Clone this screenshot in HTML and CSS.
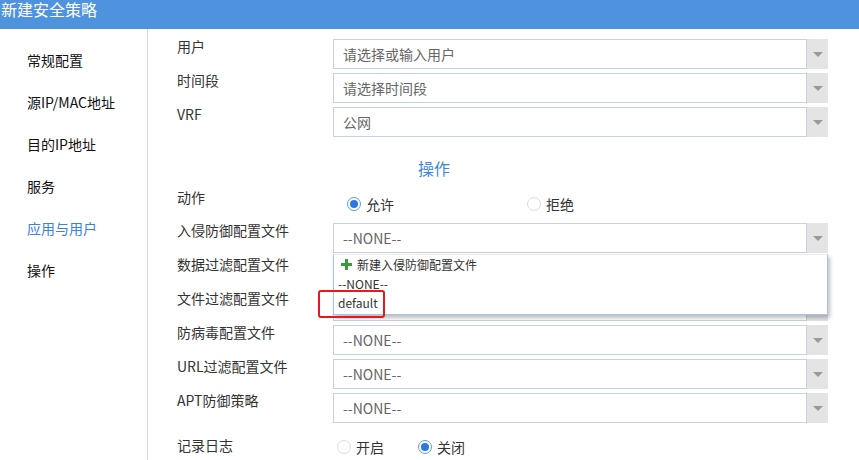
FILE: index.html
```html
<!DOCTYPE html>
<html>
<head>
    <title>新建安全策略</title>
    <link rel="stylesheet" href="styles.css">
</head>
<body>
    <div class="header">新建安全策略</div>
    <div class="layout">
        <ul class="nav">
            <li>常规配置</li>
            <li>源IP/MAC地址</li>
            <li>目的IP地址</li>
            <li>服务</li>
            <li class="active">应用与用户</li>
            <li>操作</li>
        </ul>
        <div class="main">
            <div class="row">
                <div class="label">用户</div>
                <div class="select">
                    <div class="select-box">请选择或输入用户</div>
                    <div class="select-arrow"><span class="tri"></span></div>
                </div>
            </div>
            <div class="row">
                <div class="label">时间段</div>
                <div class="select">
                    <div class="select-box">请选择时间段</div>
                    <div class="select-arrow"><span class="tri"></span></div>
                </div>
            </div>
            <div class="row">
                <div class="label">VRF</div>
                <div class="select">
                    <div class="select-box">公网</div>
                    <div class="select-arrow"><span class="tri"></span></div>
                </div>
            </div>

            <div class="section-title">操作</div>

            <div class="row row-radio">
                <div class="label">动作</div>
                <div class="radios radios-wide">
                    <label class="radio"><span class="dot checked"></span>允许</label>
                    <label class="radio"><span class="dot"></span>拒绝</label>
                </div>
            </div>
            <div class="row">
                <div class="label">入侵防御配置文件</div>
                <div class="select">
                    <div class="select-box">--NONE--</div>
                    <div class="select-arrow"><span class="tri"></span></div>
                    <div class="dropdown">
                        <div class="dd-item dd-new">
                            <svg width="11" height="11" viewBox="0 0 11 11"><path d="M4 0h3v4h4v3H7v4H4V7H0V4h4z" fill="#3c9a3c"/></svg>
                            新建入侵防御配置文件
                        </div>
                        <div class="dd-item">--NONE--</div>
                        <div class="dd-item">default</div>
                        <div class="mark"></div>
                    </div>
                </div>
            </div>
            <div class="row">
                <div class="label">数据过滤配置文件</div>
                <div class="select">
                    <div class="select-box">--NONE--</div>
                    <div class="select-arrow"><span class="tri"></span></div>
                </div>
            </div>
            <div class="row">
                <div class="label">文件过滤配置文件</div>
                <div class="select">
                    <div class="select-box">--NONE--</div>
                    <div class="select-arrow"><span class="tri"></span></div>
                </div>
            </div>
            <div class="row">
                <div class="label">防病毒配置文件</div>
                <div class="select">
                    <div class="select-box">--NONE--</div>
                    <div class="select-arrow"><span class="tri"></span></div>
                </div>
            </div>
            <div class="row">
                <div class="label">URL过滤配置文件</div>
                <div class="select">
                    <div class="select-box">--NONE--</div>
                    <div class="select-arrow"><span class="tri"></span></div>
                </div>
            </div>
            <div class="row">
                <div class="label">APT防御策略</div>
                <div class="select">
                    <div class="select-box">--NONE--</div>
                    <div class="select-arrow"><span class="tri"></span></div>
                </div>
            </div>
            <div class="row row-log">
                <div class="label">记录日志</div>
                <div class="radios radios-narrow">
                    <label class="radio"><span class="dot"></span>开启</label>
                    <label class="radio"><span class="dot checked"></span>关闭</label>
                </div>
            </div>
        </div>
    </div>
</body>
</html>
```

FILE: styles.css
```css
* {
    margin: 0;
    padding: 0;
    box-sizing: border-box;
}

body {
    background: #fff;
    font-family: "Noto Sans CJK SC", "Noto Sans", sans-serif;
    font-size: 14px;
    color: #333;
    overflow: hidden;
}

.header {
    height: 29px;
    background: #4f93de;
    color: #fff;
    font-size: 16px;
    line-height: 19px;
    padding-left: 1px;
}

.layout {
    display: flex;
    height: 431px;
}

.nav {
    list-style: none;
    width: 148px;
    border-right: 1px solid #d9d9d9;
    padding: 10px 0 0 27px;
}

.nav li {
    height: 42px;
    line-height: 42px;
    color: #111;
}

.nav li.active {
    color: #3c80e0;
}

.main {
    flex: 1;
    display: flex;
    flex-direction: column;
    padding: 10px 0 0 29px;
}

.row {
    display: grid;
    grid-template-columns: 156px 495px;
    height: 30px;
    flex: none;
    margin-bottom: 4px;
}

.label {
    line-height: 14px;
    color: #333;
}

.row-log .label {
    padding-top: 2px;
}

.select {
    position: relative;
    display: flex;
}

.select-box {
    flex: 1;
    border: 1px solid #c6d1e1;
    line-height: 28px;
    padding-left: 9px;
    color: #666;
}

.select-arrow {
    width: 21px;
    background: #e4e4e4;
    display: flex;
    align-items: center;
    justify-content: center;
}

.tri {
    width: 0;
    height: 0;
    border-left: 5px solid transparent;
    border-right: 5px solid transparent;
    border-top: 5px solid #9a9a9a;
}

.section-title {
    margin-top: 16px;
    padding-left: 241px;
    font-size: 16px;
    line-height: 22px;
    color: #3f86e0;
}

.row-radio {
    margin-top: 11px;
    height: 29px;
}

.row-log {
    margin-top: 9px;
}

.radios {
    display: flex;
    align-items: flex-start;
    margin-top: 5px;
}

.radios-wide {
    padding-left: 14px;
}

.radios-wide .radio {
    width: 180px;
}

.row-log .radios {
    margin-top: 2px;
}

.radios-narrow {
    padding-left: 4px;
}

.radios-narrow .radio {
    width: 81px;
}

.radio {
    display: flex;
    align-items: center;
    gap: 5px;
    height: 18px;
    line-height: 18px;
    color: #333;
}

.dot {
    position: relative;
    width: 14px;
    height: 14px;
    border: 1px solid #dcdcdc;
    border-radius: 50%;
    background: #fff;
}

.dot.checked {
    border-color: #5a9be8;
}

.dot.checked::after {
    content: "";
    position: absolute;
    left: 2px;
    top: 2px;
    width: 8px;
    height: 8px;
    border-radius: 50%;
    background: #2b79df;
}

.dropdown {
    position: absolute;
    top: 31px;
    left: 0;
    width: 495px;
    background: #fff;
    border: 1px solid #a9c2e8;
    border-top-color: #e6ecf5;
    box-shadow: 2px 3px 4px rgba(0,0,0,0.25);
    padding: 0 0 2px;
    z-index: 2;
}

.dd-item {
    font-size: 12px;
    line-height: 19px;
    padding-left: 4px;
    color: #333;
}

.dd-new {
    display: flex;
    align-items: center;
    gap: 5px;
    padding-left: 7px;
}

.mark {
    position: absolute;
    left: -16px;
    top: 35px;
    width: 67px;
    height: 28px;
    border: 2px solid #e8191b;
    border-radius: 3px;
}
```
